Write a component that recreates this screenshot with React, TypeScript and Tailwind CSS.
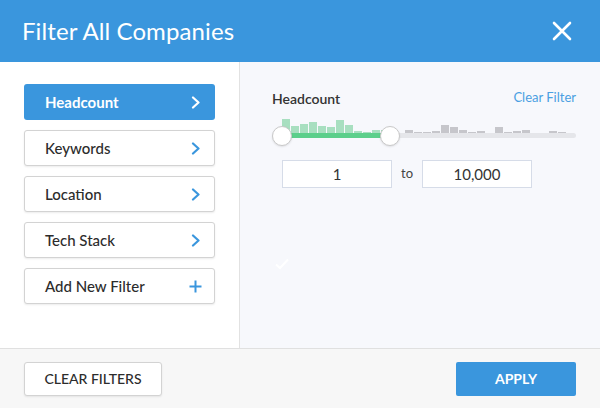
import React from "react";

const greenBars = [14, 7, 9, 11, 7, 6, 13, 8, 2, 1, 3, 3];
const grayBars = [3, 1, 1, 2, 8, 6, 3, 1, 2, 0, 6, 1, 2, 3, 0, 0, 2, 1];

const filters = [
  { name: "Headcount", active: true },
  { name: "Keywords" },
  { name: "Location" },
  { name: "Tech Stack" },
];

const Chevron = ({ color }: { color: string }) => (
  <svg width="10" height="13" viewBox="0 0 10 13" fill="none">
    <path
      d="M2 1.5L7.5 6.5L2 11.5"
      stroke={color}
      strokeWidth="2.2"
      strokeLinecap="round"
      strokeLinejoin="round"
    />
  </svg>
);

const App: React.FC = () => {
  return (
    <div className="w-[600px] h-[408px] bg-white font-['Lato',sans-serif] flex flex-col overflow-hidden">
      {/* header */}
      <div className="h-[62px] shrink-0 bg-[#3a96dd] flex items-center justify-between pl-[22px] pr-[28px]">
        <h1 className="text-white text-[24px] leading-none tracking-[0.1px]">Filter All Companies</h1>
        <button>
          <svg width="20" height="20" viewBox="0 0 20 20">
            <path d="M2 2L18 18M18 2L2 18" stroke="white" strokeWidth="2.6" strokeLinecap="round" />
          </svg>
        </button>
      </div>

      {/* body */}
      <div className="h-[286px] flex">
        <div className="w-[240px] shrink-0 border-r border-[#e2e2e2] bg-white pt-[22px] px-[24px] flex flex-col gap-[10px]">
          {filters.map((f) =>
            f.active ? (
              <button
                key={f.name}
                className="h-[36px] rounded-[3px] bg-[#3a96dd] flex items-center justify-between pl-[21px] pr-[14px] text-white text-[15px] font-bold"
              >
                {f.name}
                <Chevron color="#ffffff" />
              </button>
            ) : (
              <button
                key={f.name}
                className="h-[36px] rounded-[3px] bg-white border border-[#d3d3d3] shadow-[0_1px_2px_rgba(0,0,0,0.08)] flex items-center justify-between pl-[20px] pr-[13px] text-[#2c2c2c] text-[15px] font-medium"
              >
                {f.name}
                <Chevron color="#3a96dd" />
              </button>
            )
          )}
          <button className="h-[36px] rounded-[3px] bg-white border border-[#d3d3d3] shadow-[0_1px_2px_rgba(0,0,0,0.08)] flex items-center justify-between pl-[20px] pr-[12px] text-[#2c2c2c] text-[15px] font-medium">
            Add New Filter
            <svg width="13" height="13" viewBox="0 0 13 13">
              <path d="M6.5 0.5V12.5M0.5 6.5H12.5" stroke="#3a96dd" strokeWidth="2" />
            </svg>
          </button>
        </div>

        <div className="flex-1 bg-[#f7f8fc] pt-[26px] pl-[32px] pr-[24px]">
          <div className="flex items-center justify-between h-[20px]">
            <span className="text-[14px] font-semibold text-[#333]">Headcount</span>
            <span className="text-[13px] text-[#4a9fe2]">Clear Filter</span>
          </div>

          <div className="relative h-[30px] mt-[8px]">
            <div className="absolute left-[10px] bottom-[13px] flex items-end gap-px">
              {greenBars.map((h, i) => (
                <div key={i} className="w-[8px] bg-[#a8dfc0]" style={{ height: h }} />
              ))}
            </div>
            <div className="absolute left-[133px] bottom-[13px] flex items-end gap-px">
              {grayBars.map((h, i) => (
                <div key={i} className="w-[8px] bg-[#c6c6cb]" style={{ height: h }} />
              ))}
            </div>
            <div className="absolute left-[10px] right-0 top-[17px] h-[5px] rounded-full bg-[#e5e6ea]" />
            <div className="absolute left-[10px] w-[108px] top-[17px] h-[5px] bg-[#5ccf8b]" />
            <div className="absolute left-0 top-[10px] w-[20px] h-[20px] rounded-full bg-white border border-[#c9c9c9] shadow-[0_1px_2px_rgba(0,0,0,0.1)]" />
            <div className="absolute left-[108px] top-[10px] w-[20px] h-[20px] rounded-full bg-white border border-[#c9c9c9] shadow-[0_1px_2px_rgba(0,0,0,0.1)]" />
          </div>

          <div className="flex items-center mt-[14px] ml-[10px]">
            <div className="w-[110px] h-[28px] bg-white border border-[#d6dce8] flex items-center justify-center text-[15px] text-[#333]">
              1
            </div>
            <span className="w-[30px] text-center text-[13px] text-[#444]">to</span>
            <div className="w-[110px] h-[28px] bg-white border border-[#d6dce8] flex items-center justify-center text-[15px] text-[#333]">
              10,000
            </div>
          </div>

          <div className="mt-[70px] ml-[3px]">
            <svg width="14" height="12" viewBox="0 0 14 12">
              <path d="M1 6.5L5 10L13 1.5" stroke="white" strokeWidth="2" fill="none" />
            </svg>
          </div>
        </div>
      </div>

      {/* footer */}
      <div className="flex-1 bg-[#f7f7f7] border-t border-[#e0e0e0] flex items-center justify-between px-[24px]">
        <button className="w-[138px] h-[34px] bg-white border border-[#d3d3d3] rounded-[3px] shadow-[0_1px_2px_rgba(0,0,0,0.08)] text-[14px] font-medium text-[#2c2c2c] uppercase">
          Clear Filters
        </button>
        <button className="w-[120px] h-[34px] bg-[#3a96dd] rounded-[2px] text-[14px] font-bold text-white uppercase">
          Apply
        </button>
      </div>
    </div>
  );
};

export default App;
